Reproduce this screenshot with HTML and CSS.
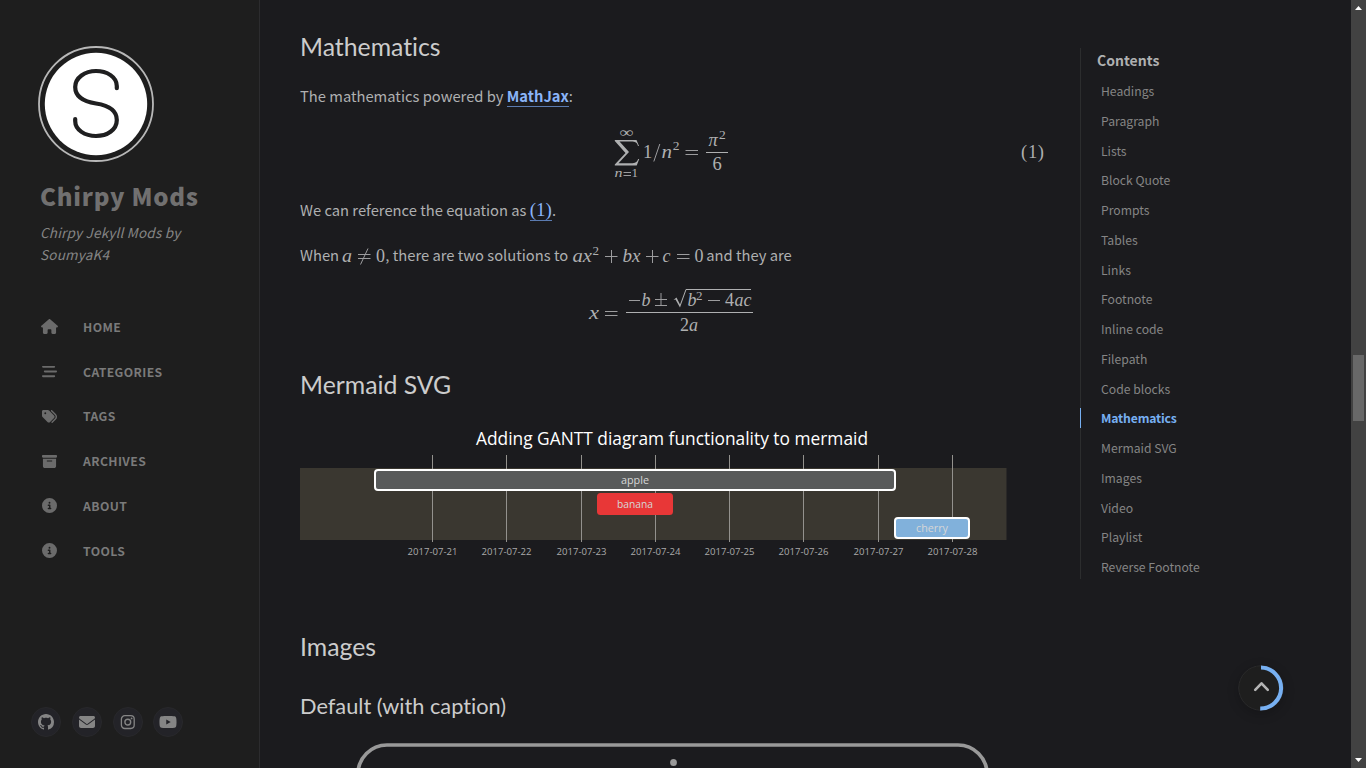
FILE: index.html
```html
<!DOCTYPE html>
<html lang="en">
<head>
<meta charset="utf-8">
<title>Chirpy Mods</title>
<link rel="stylesheet" href="styles.css">
</head>
<body>
<aside class="sidebar">
  <svg class="avatar" viewBox="38 46 116 116">
    <circle cx="96" cy="104" r="57" fill="none" stroke="#b8b8b8" stroke-width="1.8"/>
    <circle cx="96" cy="104" r="51.2" fill="#fff"/>
    <path d="M116.8 88.2V86C116.8 77 107 71 96 71S75.2 77.500 75.200 87C75.200 97 83 101.500 96 103.500S116.800 111 116.800 120C116.800 130 107 136 96 136S75.200 130 75.200 121V119" fill="none" stroke="#1f1f20" stroke-width="4.200" stroke-linecap="round"/>
  </svg>
  <h1 class="site-title">Chirpy Mods</h1>
  <p class="site-subtitle">Chirpy Jekyll Mods by<br>SoumyaK4</p>
  <nav class="nav">
    <a class="nav-item"><svg viewBox="0 0 576 512" class="icon wide"><path d="M575.8 255.5c0 18-15 32.1-32 32.1l-32 0 .7 160.2c0 2.7-.2 5.4-.5 8.1l0 16.2c0 22.1-17.9 40-40 40l-16 0c-1.1 0-2.2 0-3.3-.1c-1.4 .1-2.8 .1-4.2 .1L416 512l-24 0c-22.1 0-40-17.9-40-40l0-24 0-64c0-17.7-14.3-32-32-32l-64 0c-17.700 0-32 14.300-32 32l0 64 0 24c0 22.100-17.900 40-40 40l-24 0-31.900 0c-1.500 0-3-.1-4.500-.2c-1.200 .1-2.400 .2-3.600 .2l-16 0c-22.100 0-40-17.900-40-40l0-112c0-.9 0-1.900 .1-2.800l0-69.700-32 0c-18 0-32-14-32-32.100c0-9 3-17 10-24L266.400 8c7-7 15-8 22-8s15 2 21 7L564.800 231.500c8 7 12 15 11 24z"/></svg><span>HOME</span></a>
    <a class="nav-item"><svg viewBox="0 0 512 512" class="icon"><path d="M0 96C0 78.300 14.300 64 32 64l384 0c17.700 0 32 14.300 32 32s-14.300 32-32 32L32 128C14.300 128 0 113.700 0 96zM64 256c0-17.700 14.300-32 32-32l384 0c17.700 0 32 14.300 32 32s-14.300 32-32 32L96 288c-17.700 0-32-14.300-32-32zM448 416c0 17.700-14.300 32-32 32L32 448c-17.700 0-32-14.300-32-32s14.300-32 32-32l384 0c17.700 0 32 14.300 32 32z"/></svg><span>CATEGORIES</span></a>
    <a class="nav-item"><svg viewBox="0 0 512 512" class="icon"><path d="M345 39.100L472.800 168.400c52.400 53 52.400 138.200 0 191.200L360.800 472.900c-9.300 9.400-24.500 9.500-33.900 .2s-9.500-24.500-.2-33.900L438.600 325.900c33.900-34.300 33.900-89.400 0-123.700L310.900 72.900c-9.300-9.400-9.200-24.600 .2-33.900s24.600-9.200 33.900 .2zM0 229.500L0 80C0 53.500 21.500 32 48 32l149.500 0c17 0 33.300 6.700 45.300 18.700l168 168c25 25 25 65.500 0 90.500L277.300 442.700c-25 25-65.500 25-90.500 0l-168-168C6.700 262.700 0 246.500 0 229.500zM144 144a32 32 0 1 0 -64 0 32 32 0 1 0 64 0z"/></svg><span>TAGS</span></a>
    <a class="nav-item"><svg viewBox="0 0 512 512" class="icon"><path d="M32 32l448 0c17.700 0 32 14.300 32 32l0 32c0 17.700-14.300 32-32 32L32 128C14.300 128 0 113.700 0 96L0 64C0 46.300 14.300 32 32 32zm0 128l448 0 0 256c0 35.300-28.700 64-64 64L96 480c-35.300 0-64-28.700-64-64l0-256zm128 80c0 8.800 7.200 16 16 16l160 0c8.800 0 16-7.200 16-16s-7.200-16-16-16l-160 0c-8.800 0-16 7.200-16 16z"/></svg><span>ARCHIVES</span></a>
    <a class="nav-item"><svg viewBox="0 0 512 512" class="icon"><path d="M256 512A256 256 0 1 0 256 0a256 256 0 1 0 0 512zM216 336l24 0 0-64-24 0c-13.300 0-24-10.700-24-24s10.700-24 24-24l48 0c13.300 0 24 10.700 24 24l0 88 8 0c13.300 0 24 10.700 24 24s-10.700 24-24 24l-80 0c-13.300 0-24-10.700-24-24s10.700-24 24-24zm40-208a32 32 0 1 1 0 64 32 32 0 1 1 0-64z"/></svg><span>ABOUT</span></a>
    <a class="nav-item"><svg viewBox="0 0 512 512" class="icon"><path d="M256 512A256 256 0 1 0 256 0a256 256 0 1 0 0 512zM216 336l24 0 0-64-24 0c-13.300 0-24-10.700-24-24s10.700-24 24-24l48 0c13.300 0 24 10.700 24 24l0 88 8 0c13.300 0 24 10.700 24 24s-10.700 24-24 24l-80 0c-13.300 0-24-10.700-24-24s10.700-24 24-24zm40-208a32 32 0 1 1 0 64 32 32 0 1 1 0-64z"/></svg><span>TOOLS</span></a>
  </nav>
  <div class="social">
    <a class="dot"><svg viewBox="0 0 16 16" width="16" height="16"><path d="M8 0C3.580 0 0 3.580 0 8c0 3.540 2.290 6.530 5.470 7.590.4.070.55-.17.55-.38 0-.19-.01-.82-.01-1.490-2.010.37-2.530-.49-2.690-.94-.09-.23-.48-.94-.82-1.130-.28-.15-.68-.52-.01-.53.63-.01 1.080.58 1.230.82.72 1.210 1.870.87 2.330.66.070-.52.28-.87.51-1.070-1.780-.2-3.640-.89-3.640-3.950 0-.87.31-1.590.82-2.150-.08-.2-.36-1.020.08-2.120 0 0 .67-.21 2.200.82.64-.18 1.320-.27 2-.27s1.360.09 2 .27c1.530-1.040 2.200-.82 2.200-.82.44 1.100.16 1.920.08 2.120.51.56.82 1.270.82 2.150 0 3.070-1.870 3.750-3.650 3.950.29.25.54.73.54 1.480 0 1.070-.01 1.930-.01 2.200 0 .21.15.46.55.38A8.010 8.010 0 0 0 16 8c0-4.420-3.580-8-8-8z"/></svg></a>
    <a class="dot"><svg viewBox="0 0 512 512" width="16" height="16"><path d="M48 64C21.500 64 0 85.500 0 112c0 15.100 7.100 29.300 19.200 38.400L236.800 313.600c11.400 8.500 27 8.500 38.400 0L492.800 150.400c12.100-9.100 19.200-23.300 19.200-38.400c0-26.500-21.500-48-48-48L48 64zM0 176L0 384c0 35.300 28.700 64 64 64l384 0c35.300 0 64-28.700 64-64l0-208L294.400 339.200c-22.800 17.100-54 17.100-76.800 0L0 176z"/></svg></a>
    <a class="dot"><svg viewBox="0 0 16 16" width="16" height="16"><rect x="1.400" y="1.700" width="12.800" height="12.800" rx="3.400" fill="none" stroke="#858585" stroke-width="1.300"/><circle cx="7.800" cy="8.100" r="2.900" fill="none" stroke="#858585" stroke-width="1.400"/><circle cx="11.600" cy="4.400" r=".9"/></svg></a>
    <a class="dot"><svg viewBox="0 0 576 512" width="18" height="16"><path d="M549.655 124.083c-6.281-23.650-24.787-42.276-48.284-48.597C458.781 64 288 64 288 64S117.220 64 74.629 75.486c-23.497 6.322-42.003 24.947-48.284 48.597-11.412 42.867-11.412 132.305-11.412 132.305s0 89.438 11.412 132.305c6.281 23.650 24.787 41.500 48.284 47.821C117.220 448 288 448 288 448s170.780 0 213.371-11.486c23.497-6.321 42.003-24.171 48.284-47.821 11.412-42.867 11.412-132.305 11.412-132.305s0-89.438-11.412-132.305zm-317.510 213.508V175.185l142.739 81.205-142.739 81.201z"/></svg></a>
  </div>
</aside>
<main class="content">
  <h2>Mathematics</h2>
  <p class="first">The mathematics powered by <a class="link strong">MathJax</a>:</p>
  <svg class="figure math" viewBox="300 111 744 86" height="86">
    <text x="619.500" y="137" font-size="14" textLength="14" lengthAdjust="spacingAndGlyphs">∞</text>
    <path d="M614.800 140H636.500L639 146H638C637 142.500 635.500 141.600 631 141.600H619.500L629 152L618.500 163.200H631C635.500 163.200 637 162 638.200 159H639.200L636.700 165.500H614.800V164.500L625.500 153L614.800 141Z"/>
    <text x="614.500" y="177" font-size="13.500" class="it" textLength="8" lengthAdjust="spacingAndGlyphs">n</text><path class="rule" d="M623.500 172.500H631M623.500 175.500H631"/>
    <text x="631.500" y="177" font-size="13">1</text>
    <text x="643" y="157.500" font-size="18.500">1</text><path class="rule" d="M653.800 161.500L659.800 144"/>
    <text x="661.500" y="157.500" class="it" font-size="18.500" textLength="10.500" lengthAdjust="spacingAndGlyphs">n</text>
    <text x="672.800" y="149.500" font-size="13.500">2</text>
    <path class="rule" d="M685.500 150.500H698M685.500 154.500H698"/>
    <text x="708.500" y="145.500" class="it" font-size="18.500">π</text><text x="719" y="138.500" font-size="13.500">2</text>
    <path class="bar" d="M706 152.500H728"/>
    <text x="712.500" y="169.500" font-size="18.500">6</text>
    <text x="1021" y="157.500" font-size="18.500" textLength="23">(1)</text>
  </svg>
  <p>We can reference the equation as <a class="link eq">(1)</a>.</p>
  <p class="gap">When <svg class="inline math" viewBox="342 243 44 24" width="44" height="24"><text x="342" y="261.500" class="it" font-size="18" textLength="10" lengthAdjust="spacingAndGlyphs">a</text><path class="rule" d="M358 254.500H370.500M358 258.500H370.500M360.500 264.500L368 248.500"/><text x="376" y="261.500" font-size="18">0</text></svg>, there are two solutions to <svg class="inline math second" viewBox="571 243 132 24" width="132" height="24"><text x="571.500" y="261.500" class="it" font-size="18" textLength="19.500" lengthAdjust="spacingAndGlyphs">ax</text><text x="591.500" y="254.500" font-size="13">2</text><path class="rule" d="M604 256.500H616.500M610.500 250V263M645 256.500H657.500M651.500 250V263M676 254.500H688.500M676 258.500H688.500"/><text x="621.500" y="261.500" class="it" font-size="18" textLength="18" lengthAdjust="spacingAndGlyphs">bx</text><text x="661.500" y="261.500" class="it" font-size="18">c</text><text x="693.500" y="261.500" font-size="18">0</text></svg> and they are</p>
  <svg class="figure math" viewBox="300 270 744 100" height="100">
    <text x="589" y="318.500" class="it" font-size="19" textLength="10" lengthAdjust="spacingAndGlyphs">x</text>
    <path class="rule" d="M605 311.500H617.500M605 315.500H617.500M629 300.500H640M655 299.500H667M661 293V305.500M655 305.500H667M708 300.500H720"/>
    <text x="641.500" y="305.500" class="it" font-size="18">b</text>
    <path d="M673.500 300L676.500 297.500L680 304.500L685.500 289.500H686.500L680 307.500L675.500 299.500Z"/>
    <path class="bar" d="M686 289.500H751"/>
    <text x="687.500" y="305.500" class="it" font-size="18">b</text><text x="696" y="300" font-size="13">2</text>
    <text x="725" y="305.500" font-size="18">4</text><text x="734.500" y="305.500" class="it" font-size="18" textLength="17" lengthAdjust="spacingAndGlyphs">ac</text>
    <path class="bar" d="M626 312.500H753"/>
    <text x="680" y="330.500" font-size="18">2</text><text x="689" y="330.500" class="it" font-size="18">a</text>
  </svg>
  <h2>Mermaid SVG</h2>
  <svg class="figure gantt" viewBox="300 400 744 232" height="232">
    <rect x="300" y="468" width="706.500" height="72" fill="#3a3730"/>
    <path d="M432.500 455V542M506.500 455V542M581.500 455V542M655.500 455V542M729.500 455V542M803.500 455V542M878.500 455V542M952.500 455V542" stroke="#93918d"/>
    <rect x="375" y="470" width="520" height="20" rx="3" fill="#585a5a" stroke="#fff" stroke-width="2"/>
    <rect x="597" y="493" width="76" height="22" rx="3.500" fill="#e83737"/>
    <rect x="895" y="518" width="74" height="20" rx="3" fill="#81b1db" stroke="#fff" stroke-width="2"/>
    <text x="476" y="445" font-size="18.500" fill="#fff" textLength="392" lengthAdjust="spacingAndGlyphs">Adding GANTT diagram functionality to mermaid</text>
    <g font-size="11" fill="#d6d6d6">
      <text x="621" y="484" textLength="28" lengthAdjust="spacingAndGlyphs">apple</text>
      <text x="617" y="508" textLength="36" lengthAdjust="spacingAndGlyphs">banana</text>
      <text x="916" y="532" textLength="32" lengthAdjust="spacingAndGlyphs">cherry</text>
    </g>
    <g font-size="9.800" fill="#aaa">
      <text x="407.500" y="555" textLength="50" lengthAdjust="spacingAndGlyphs">2017-07-21</text>
      <text x="481.500" y="555" textLength="50" lengthAdjust="spacingAndGlyphs">2017-07-22</text>
      <text x="556.500" y="555" textLength="50" lengthAdjust="spacingAndGlyphs">2017-07-23</text>
      <text x="630.500" y="555" textLength="50" lengthAdjust="spacingAndGlyphs">2017-07-24</text>
      <text x="704.500" y="555" textLength="50" lengthAdjust="spacingAndGlyphs">2017-07-25</text>
      <text x="778.500" y="555" textLength="50" lengthAdjust="spacingAndGlyphs">2017-07-26</text>
      <text x="853.500" y="555" textLength="50" lengthAdjust="spacingAndGlyphs">2017-07-27</text>
      <text x="927.500" y="555" textLength="50" lengthAdjust="spacingAndGlyphs">2017-07-28</text>
    </g>
  </svg>
  <h2>Images</h2>
  <h3>Default (with caption)</h3>
  <svg class="figure" viewBox="300 721 744 47" height="47">
    <rect x="358" y="745" width="629" height="300" rx="29" fill="none" stroke="#999" stroke-width="3.700"/>
    <ellipse cx="673.500" cy="762.500" rx="3.400" ry="3.600" fill="#999"/>
  </svg>
</main>
<aside class="toc-column">
  <div class="toc">
    <h4>Contents</h4>
    <a>Headings</a><a>Paragraph</a><a>Lists</a><a>Block Quote</a><a>Prompts</a><a>Tables</a><a>Links</a><a>Footnote</a><a>Inline code</a><a>Filepath</a><a>Code blocks</a><a class="active">Mathematics</a><a>Mermaid SVG</a><a>Images</a><a>Video</a><a>Playlist</a><a>Reverse Footnote</a>
  </div>
  <svg class="to-top" viewBox="0 0 46 46" width="46" height="46">
    <circle cx="23" cy="23" r="22.300" fill="#1e1e1e" stroke="#2a2a2b" stroke-width="1"/>
    <path d="M23 2.500A20.500 20.500 0 0 1 22.200 43.500" fill="none" stroke="#77b0f2" stroke-width="4"/>
    <path d="M17.200 24.800L23.500 18.300L29.800 24.800" fill="none" stroke="#b4b4b4" stroke-width="2.600" stroke-linecap="round" stroke-linejoin="round"/>
  </svg>
</aside>
<div class="scrollbar">
  <svg viewBox="0 0 15 15" width="15" height="15"><path d="M4 10H11L7.500 6Z"/></svg>
  <div class="thumb"></div>
  <svg viewBox="0 0 15 15" width="15" height="15"><path d="M4 5H11L7.500 9Z"/></svg>
</div>
</body>
</html>
```
FILE: styles.css
```css
* { box-sizing: border-box; }
body {
  margin: 0;
  height: 768px;
  display: flex;
  overflow: hidden;
  background: #1b1b1e;
  color: #afb0b1;
  font-family: "Noto Sans CJK SC", "Noto Sans", sans-serif;
}
h1, h2, h3, h4, p { margin: 0; }

.sidebar {
  width: 260px;
  padding: 46px 0 31px 38px;
  background: #1e1e1e;
  border-right: 1px solid #2c2c2e;
  display: flex;
  flex-direction: column;
}
.avatar { width: 116px; height: 116px; }
.site-title {
  margin: 18px 0 0 2px;
  font-size: 24px;
  line-height: 32px;
  font-weight: 900;
  letter-spacing: .75px;
  color: #717070;
}
.site-subtitle {
  margin: 9px 0 0 2px;
  font-size: 13.500px;
  line-height: 22px;
  letter-spacing: .2px;
  font-style: italic;
  color: #858585;
}
.nav { margin-top: 39.600px; display: flex; flex-direction: column; }
.nav-item {
  height: 44.750px;
  display: flex;
  align-items: center;
  font-size: 12.200px;
  font-weight: 700;
  letter-spacing: .4px;
  color: #7a7a7a;
}
.icon { width: 15px; height: 15px; margin: 0 26px 0 4px; fill: #6b6b6b; }
.icon.wide { width: 17px; margin: 0 25px 0 3px; }
.social { margin-top: auto; margin-left: -7px; display: flex; gap: 10.800px; }
.dot {
  width: 30px;
  height: 30px;
  border-radius: 50%;
  background: #232328;
  border: 1px solid #28282b;
  display: flex;
  align-items: center;
  justify-content: center;
}
.dot svg { fill: #858585; }

.content { width: 744px; margin-left: 40px; padding-top: 32px; height: 768px; }
h2, h3 {
  font-family: Lato, sans-serif;
  font-weight: 400;
  font-variant-ligatures: none;
  color: #cccccc;
}
h2 { font-size: 24.800px; line-height: 30px; }
h3 { margin-top: 29px; font-size: 21.750px; line-height: 30px; }
.content p { height: 28px; font-size: 14.740px; line-height: 26px; white-space: nowrap; }
.first { margin-top: 21px; }
.gap { margin-top: 17px; }
.link { color: #8ab4f8; border-bottom: 1px solid #5b7bb0; }
.strong { font-weight: 700; }
.content .eq { font-family: "Liberation Serif", serif; font-size: 19px; line-height: 18px; }
.figure { display: block; width: 744px; }
.math { fill: #afb0b1; font-family: "Liberation Serif", serif; }
.math .it { font-style: italic; }
.math .rule { stroke: #9c9c9e; stroke-width: 1; fill: none; }
.math .bar { stroke: #afb0b1; stroke-width: 1; }
.inline { display: inline-block; vertical-align: -6px; margin-right: -1px; }
.inline.second { margin-right: -.5px; }
.gantt { font-family: "Trebuchet MS", "Open Sans", sans-serif; }

.toc-column {
  margin-left: 36px;
  width: 271px;
  padding-top: 48px;
  display: flex;
  flex-direction: column;
}
.toc { height: 531px; border-left: 1px solid #2c2d2e; display: flex; flex-direction: column; }
.toc h4 {
  height: 28px;
  flex: none;
  padding-left: 16px;
  font-size: 14px;
  line-height: 24px;
  font-weight: 700;
  color: #afb0b1;
}
.toc a {
  height: 29.750px;
  flex: none;
  padding-left: 20px;
  font-size: 12.200px;
  line-height: 30px;
  color: #858585;
}
.toc .active {
  height: 20px;
  margin: 5px 0 4.750px -1px;
  line-height: 20px;
  border-left: 1px solid #77b0f2;
  color: #77b0f2;
  font-weight: 700;
  letter-spacing: -.15px;
}
.to-top {
  margin: 86px 0 0 158px;
  border-radius: 50%;
  box-shadow: 0 3px 12px rgba(0, 0, 0, .2);
}

.scrollbar { width: 15px; height: 768px; background: #424242; display: flex; flex-direction: column; }
.scrollbar svg { fill: #fff; }
.thumb { width: 11px; height: 66px; margin: 340px 0 332px 2px; background: #686868; }
```
